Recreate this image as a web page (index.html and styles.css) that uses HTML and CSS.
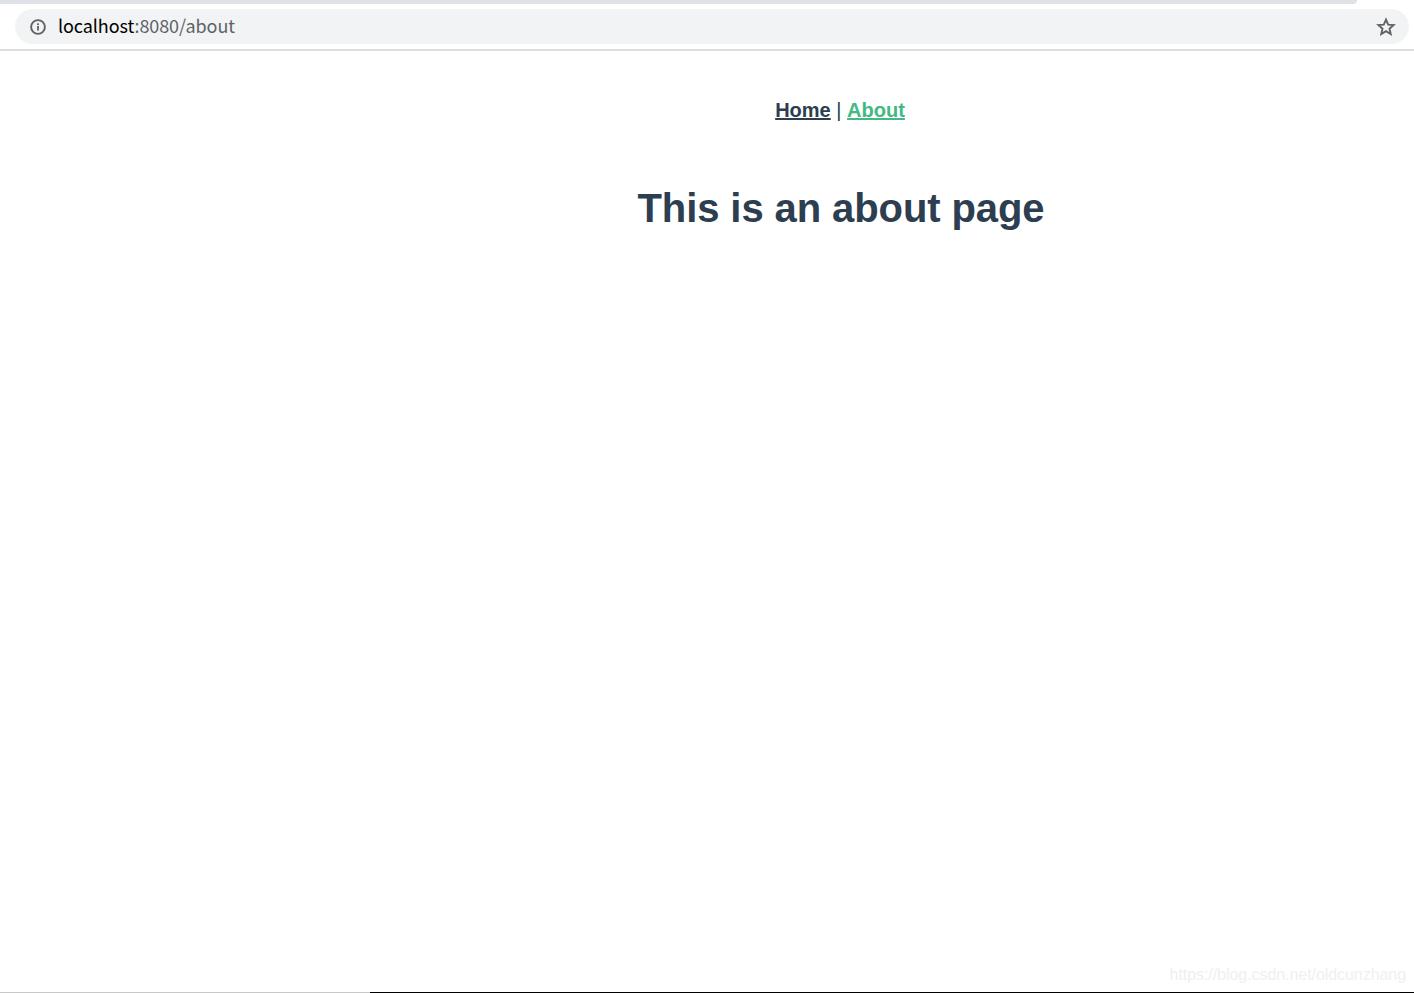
FILE: index.html
```html
<!DOCTYPE html>
<html lang="en">
<head>
<meta charset="utf-8">
<title>About</title>
<link rel="stylesheet" href="styles.css">
</head>
<body>
<div class="shell">
  <header class="chrome">
    <div class="progress"></div>
    <div class="omnibox">
      <svg class="icon-info" viewBox="0 0 16 16" width="16" height="16" aria-hidden="true">
        <circle cx="8" cy="8" r="6.9" fill="none" stroke="#5f6368" stroke-width="1.9"/>
        <rect x="7.1" y="7" width="1.8" height="4.6" fill="#5f6368"/>
        <rect x="7.1" y="4.3" width="1.8" height="1.8" fill="#5f6368"/>
      </svg>
      <div class="url"><span class="host">localhost</span>:8080/about</div>
      <svg class="icon-star" viewBox="0 0 20 20" width="20" height="20" aria-hidden="true">
        <path d="M10 2.6l2.2 5 5.4.5-4.1 3.6 1.2 5.3L10 14.2 5.300 17l1.200-5.300-4.100-3.600 5.400-.5z" fill="none" stroke="#5f6368" stroke-width="1.900" stroke-linejoin="miter"/>
      </svg>
    </div>
  </header>
  <main class="app">
    <nav class="nav">
      <a class="nav-link" href="#">Home</a> | <a class="nav-link active" href="#">About</a>
    </nav>
    <h1 class="title">This is an about page</h1>
  </main>
  <div class="edge">
    <div class="edge-light"></div>
    <div class="edge-dark"></div>
  </div>
  <div class="watermark">https://blog.csdn.net/oldcunzhang</div>
</div>
</body>
</html>
```

FILE: styles.css
```css
* { box-sizing: border-box; }
html, body { margin: 0; height: 100%; background: #fff; overflow: hidden; }
.shell {
  position: relative;
  display: flex;
  flex-direction: column;
  height: 993px;
}
.chrome {
  height: 51px;
  flex: none;
  background: #fff;
  border-bottom: 2px solid #dcdde0;
}
.progress {
  width: 1357px;
  height: 4px;
  background: #dee1e6;
  border-bottom-right-radius: 6px;
}
.omnibox {
  display: flex;
  align-items: center;
  height: 35px;
  margin: 5px 5px 0 15px;
  padding: 0 13px 0 15px;
  background: #f1f3f4;
  border-radius: 18px;
}
.icon-info { flex: none; }
.url {
  flex: 1;
  margin-left: 12px;
  padding-bottom: 3px;
  font: 18px/24px "Noto Sans CJK SC", "Noto Sans", sans-serif;
  letter-spacing: -0.08px;
  color: #5f6368;
}
.host { color: #000; }
.icon-star { flex: none; }
.app {
  flex: 1;
  padding: 48px 0 0 266px;
  text-align: center;
  font-family: "Liberation Sans", Arial, sans-serif;
  color: #2c3e50;
}
.nav { font-size: 20px; line-height: 23px; color: #2c3e50; font-weight: 400; }
.nav-link { font-weight: 700; color: #2c3e50; text-decoration: underline; }
.nav-link.active { color: #42b983; }
.title {
  margin: 63px 0 0;
  padding-left: 2px;
  font-size: 40px;
  line-height: 46px;
  font-weight: 700;
  letter-spacing: -0.09px;
}
.edge { display: flex; height: 1px; flex: none; }
.edge-light { width: 370px; background: #c8c8c8; }
.edge-dark { flex: 1; background: #000; }
.watermark {
  position: absolute;
  right: 8px;
  bottom: 8px;
  font: 16px/20px "Liberation Sans", Arial, sans-serif;
  letter-spacing: -0.06px;
  color: #f0f0f0;
}
```
